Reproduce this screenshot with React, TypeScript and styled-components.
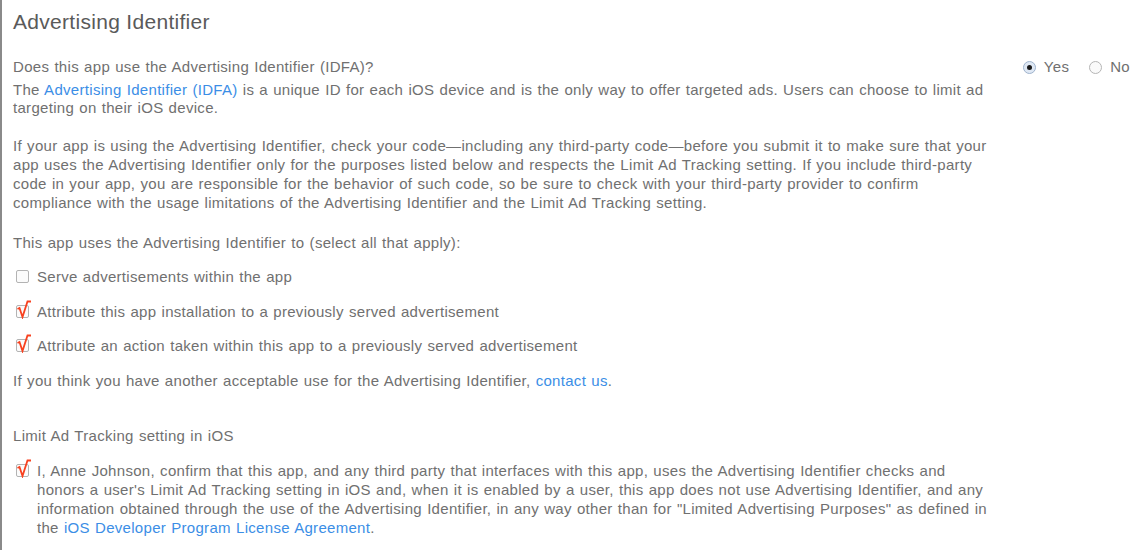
import React from "react";
import styled, { createGlobalStyle } from "styled-components";

const Global = createGlobalStyle`
  html, body { margin: 0; padding: 0; background: #fff; }
  body { font-family: "Liberation Sans", Arial, sans-serif; }
`;

const Page = styled.div`
  box-sizing: border-box;
  height: 550px;
  border-left: 2px solid #8a8a8a;
  padding: 10px 0 0 11px;
  color: #707070;
  font-size: 15px;
  letter-spacing: 0.3px;
  word-spacing: 0.7px;
  overflow: hidden;
`;

const Title = styled.h1`
  margin: 0;
  font-size: 21px;
  line-height: 24px;
  font-weight: normal;
  letter-spacing: 0.3px;
  word-spacing: 0;
  color: #5a5a5a;
`;

const QuestionRow = styled.div`
  display: flex;
  justify-content: space-between;
  align-items: center;
  margin-top: 24px;
  line-height: 18px;
  padding-right: 14px;
`;

const Radios = styled.div`
  display: flex;
  align-items: center;
  gap: 20px;
  font-size: 15px;
`;

const RadioLabel = styled.label`
  display: flex;
  align-items: center;
  gap: 8px;
`;

const RadioDot = styled.span<{ $on?: boolean }>`
  box-sizing: border-box;
  width: 13px;
  height: 13px;
  border-radius: 50%;
  border: 1px solid ${(p) => (p.$on ? "#9fb3cc" : "#b5b5b5")};
  background: ${(p) => (p.$on ? "#dfe8f4" : "#fafafa")};
  display: flex;
  align-items: center;
  justify-content: center;
  &::after {
    content: "";
    width: 5px;
    height: 5px;
    border-radius: 50%;
    background: #1a1a1a;
    display: ${(p) => (p.$on ? "block" : "none")};
  }
`;

const Para = styled.p<{ $top: number; $lh?: number }>`
  margin: ${(p) => p.$top}px 0 0;
  line-height: ${(p) => p.$lh ?? 19}px;
`;

const Link = styled.a`
  color: #3b8ee6;
  text-decoration: none;
`;

const CheckRow = styled.div<{ $top: number }>`
  display: flex;
  align-items: flex-start;
  margin-top: ${(p) => p.$top}px;
  line-height: 19px;
`;

const BoxWrap = styled.span`
  position: relative;
  flex: none;
  width: 13px;
  height: 13px;
  margin: 3px 8px 0 3px;
`;

const Box = styled.span`
  box-sizing: border-box;
  display: block;
  width: 13px;
  height: 13px;
  border: 1px solid #b3b3b3;
  border-radius: 2px;
  background: #fbfbfb;
`;

const Tick = styled.svg`
  position: absolute;
  left: 0px;
  top: -5px;
`;

const Check = ({ on }: { on?: boolean }) => (
  <BoxWrap>
    <Box />
    {on && (
      <Tick width="17" height="19" viewBox="0 0 17 19">
        <polyline
          points="1.5,9 3.5,8 6.5,17 11.5,1.5 15,1.5"
          fill="none"
          stroke="#f8411f"
          strokeWidth="1.8"
          strokeLinejoin="miter"
        />
      </Tick>
    )}
  </BoxWrap>
);

export default function App() {
  return (
    <>
      <Global />
      <Page>
        <Title>Advertising Identifier</Title>
        <QuestionRow>
          <span>Does this app use the Advertising Identifier (IDFA)?</span>
          <Radios>
            <RadioLabel>
              <RadioDot $on />
              Yes
            </RadioLabel>
            <RadioLabel>
              <RadioDot />
              No
            </RadioLabel>
          </Radios>
        </QuestionRow>
        <Para $top={5} $lh={18}>
          The <Link>Advertising Identifier (IDFA)</Link> is a unique ID for each iOS device and is the only way to offer targeted ads. Users can choose to limit ad
          <br />
          targeting on their iOS device.
        </Para>
        <Para $top={19}>
          If your app is using the Advertising Identifier, check your code—including any third-party code—before you submit it to make sure that your
          <br />
          app uses the Advertising Identifier only for the purposes listed below and respects the Limit Ad Tracking setting. If you include third-party
          <br />
          code in your app, you are responsible for the behavior of such code, so be sure to check with your third-party provider to confirm
          <br />
          compliance with the usage limitations of the Advertising Identifier and the Limit Ad Tracking setting.
        </Para>
        <Para $top={21}>This app uses the Advertising Identifier to (select all that apply):</Para>
        <CheckRow $top={15}>
          <Check />
          <span>Serve advertisements within the app</span>
        </CheckRow>
        <CheckRow $top={16}>
          <Check on />
          <span>Attribute this app installation to a previously served advertisement</span>
        </CheckRow>
        <CheckRow $top={15}>
          <Check on />
          <span>Attribute an action taken within this app to a previously served advertisement</span>
        </CheckRow>
        <Para $top={16}>
          If you think you have another acceptable use for the Advertising Identifier, <Link>contact us</Link>.
        </Para>
        <Para $top={36}>Limit Ad Tracking setting in iOS</Para>
        <CheckRow $top={16}>
          <Check on />
          <span>
            I, Anne Johnson, confirm that this app, and any third party that interfaces with this app, uses the Advertising Identifier checks and
            <br />
            honors a user's Limit Ad Tracking setting in iOS and, when it is enabled by a user, this app does not use Advertising Identifier, and any
            <br />
            information obtained through the use of the Advertising Identifier, in any way other than for "Limited Advertising Purposes" as defined in
            <br />
            the <Link>iOS Developer Program License Agreement</Link>.
          </span>
        </CheckRow>
      </Page>
    </>
  );
}
